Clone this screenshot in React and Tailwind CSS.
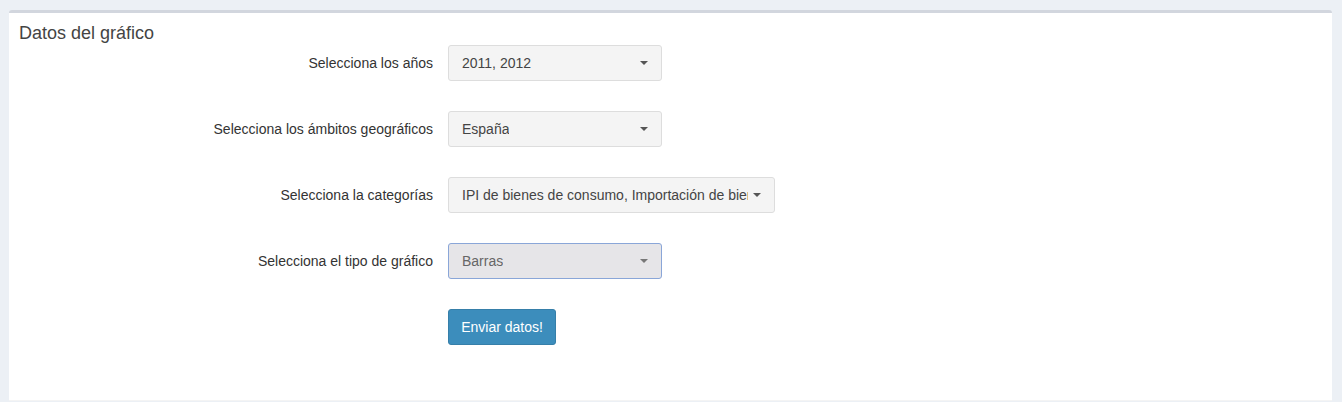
import React from "react";

const Caret = ({ muted }) => (
  <span
    className={
      "ml-auto w-0 h-0 border-l-[4px] border-r-[4px] border-t-[4px] border-l-transparent border-r-transparent shrink-0 " +
      (muted ? "border-t-[#777]" : "border-t-[#555]")
    }
  />
);

const FakeSelect = ({ value, width, disabled }) => (
  <div
    className={
      "flex items-center h-9 pl-[13px] pr-[13px] rounded-[3px] border text-[14px] " +
      (disabled
        ? "bg-[#e6e5e8] border-[#8aa6d8] text-[#666]"
        : "bg-[#f4f4f4] border-[#ddd] text-[#444]")
    }
    style={{ width }}
  >
    <span className="min-w-0 overflow-hidden whitespace-nowrap mr-[5px]">{value}</span>
    <Caret muted={disabled} />
  </div>
);

const Row = ({ label, children }) => (
  <div className="flex items-center">
    <label className="w-[424px] text-right text-[14px] text-[#333]">{label}</label>
    <div className="ml-[15px]">{children}</div>
  </div>
);

export default function App() {
  return (
    <div
      className="min-h-[402px] bg-[#ecf0f5] pt-[10px] pl-[9px] pr-[10px]"
      style={{ fontFamily: '"Liberation Sans", Arial, sans-serif' }}
    >
      <div className="bg-white border-t-[3px] border-[#d2d6de] rounded-t-[3px] h-[391px] border-b border-b-[#f4f4f4]">
        <h3 className="px-[10px] pt-[10px] text-[18px] leading-[20px] text-[#444]">Datos del gráfico</h3>
        <div className="mt-[2px] flex flex-col gap-[30px]">
          <Row label="Selecciona los años">
            <FakeSelect value="2011, 2012" width={214} />
          </Row>
          <Row label="Selecciona los ámbitos geográficos">
            <FakeSelect value="España" width={214} />
          </Row>
          <Row label="Selecciona la categorías">
            <FakeSelect value="IPI de bienes de consumo, Importación de bienes de consumo" width={327} />
          </Row>
          <Row label="Selecciona el tipo de gráfico">
            <FakeSelect value="Barras" width={214} disabled />
          </Row>
          <Row label="">
            <button className="h-9 w-[108px] rounded-[3px] bg-[#3c8dbc] border border-[#367fa9] text-white text-[14px]">
              Enviar datos!
            </button>
          </Row>
        </div>
      </div>
    </div>
  );
}
